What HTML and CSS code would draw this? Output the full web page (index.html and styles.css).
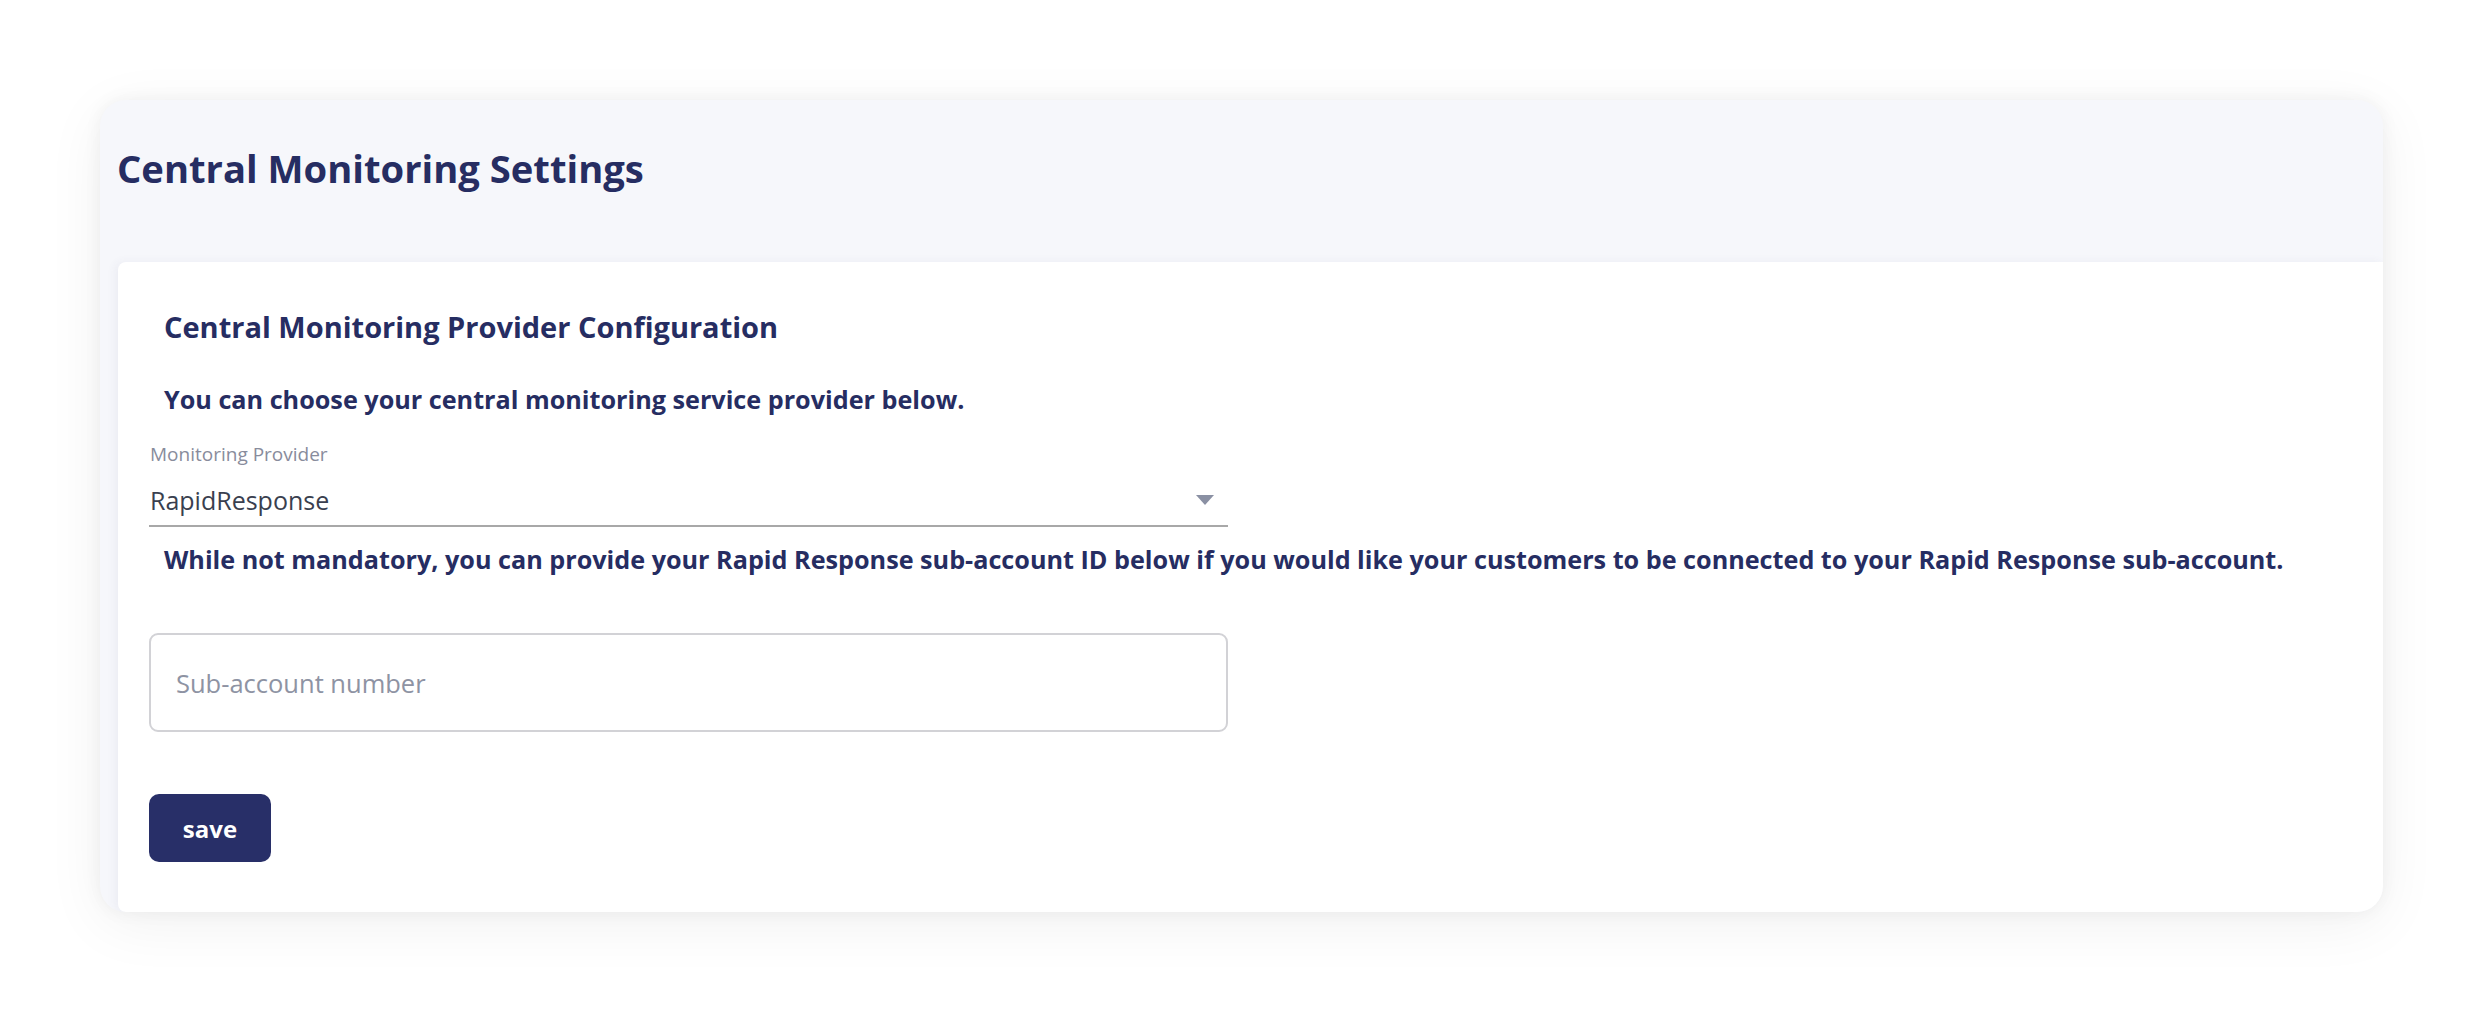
FILE: index.html
```html
<!DOCTYPE html>
<html lang="en">
<head>
<meta charset="utf-8">
<title>Central Monitoring Settings</title>
<link rel="stylesheet" href="styles.css">
</head>
<body>
<div class="page">
  <section class="card">
    <header class="card-header">
      <h1 class="title">Central Monitoring Settings</h1>
    </header>
    <div class="card-body">
      <h2 class="subtitle">Central Monitoring Provider Configuration</h2>
      <p class="note note-first">You can choose your central monitoring service provider below.</p>
      <div class="field">
        <label class="field-label">Monitoring Provider</label>
        <div class="select">
          <span class="select-value">RapidResponse</span>
          <svg class="select-arrow" width="18" height="10" viewBox="0 0 18 10"><path d="M0 0 L18 0 L9 10 Z" fill="#8a90a3"/></svg>
        </div>
      </div>
      <p class="note note-second">While not mandatory, you can provide your Rapid Response sub-account ID below if you would like your customers to be connected to your Rapid Response sub-account.</p>
      <div class="input-box">
        <span class="placeholder">Sub-account number</span>
      </div>
      <button class="save-btn">save</button>
    </div>
  </section>
</div>
</body>
</html>
```
FILE: styles.css
```css
html, body {
  margin: 0;
  padding: 0;
  background: #ffffff;
}
body {
  font-family: "Open Sans", "Noto Sans", "Liberation Sans", sans-serif;
}
.page {
  padding: 100px 101px 100px 100px;
}
.card {
  background: #f6f7fb;
  border-radius: 26px;
  overflow: hidden;
  box-shadow: 0 0 18px rgba(0, 0, 0, 0.05), 0 12px 60px rgba(0, 0, 0, 0.06);
  display: flex;
  flex-direction: column;
}
.card-header {
  height: 162px;
  box-sizing: border-box;
  padding: 44px 17px 0;
}
.title {
  margin: 0;
  font-size: 38.2px;
  line-height: 48px;
  font-weight: 700;
  color: #262d62;
}
.card-body {
  margin-left: 18px;
  background: #ffffff;
  border-radius: 8px 0 0 8px;
  box-shadow: -3px 0 10px rgba(60, 70, 120, 0.06);
  padding: 47px 31px 50px;
  display: flex;
  flex-direction: column;
  align-items: flex-start;
}
.subtitle {
  margin: 0;
  padding-left: 15px;
  font-size: 29px;
  line-height: 36px;
  font-weight: 700;
  color: #262d62;
}
.note {
  margin: 0;
  padding-left: 15px;
  font-size: 25.2px;
  line-height: 32px;
  font-weight: 700;
  color: #262d62;
}
.note-first {
  margin-top: 38px;
}
.field {
  margin-top: 26px;
  width: 1079px;
  display: flex;
  flex-direction: column;
}
.field-label {
  font-size: 19px;
  line-height: 26px;
  color: #888c9c;
  padding-left: 1px;
}
.select {
  margin-top: 16px;
  display: flex;
  align-items: center;
  justify-content: space-between;
  padding: 0 14px 8px 1px;
  border-bottom: 2px solid #a8a8a8;
}
.select-value {
  font-size: 25px;
  line-height: 34px;
  color: #3a3f4f;
}
.select-arrow {
  display: block;
}
.note-second {
  margin-top: 16px;
}
.input-box {
  margin-top: 58px;
  width: 1079px;
  height: 99px;
  box-sizing: border-box;
  border: 2px solid #d2d2d6;
  border-radius: 9px;
  display: flex;
  align-items: center;
  padding: 0 25px;
}
.placeholder {
  font-size: 25.5px;
  line-height: 34px;
  color: #8e93a3;
}
.save-btn {
  margin-top: 62px;
  width: 122px;
  height: 68px;
  border: none;
  border-radius: 10px;
  background: #282f68;
  color: #ffffff;
  font-family: "Open Sans", "Noto Sans", "Liberation Sans", sans-serif;
  font-size: 24px;
  font-weight: 700;
  padding: 0;
  cursor: pointer;
}
```
